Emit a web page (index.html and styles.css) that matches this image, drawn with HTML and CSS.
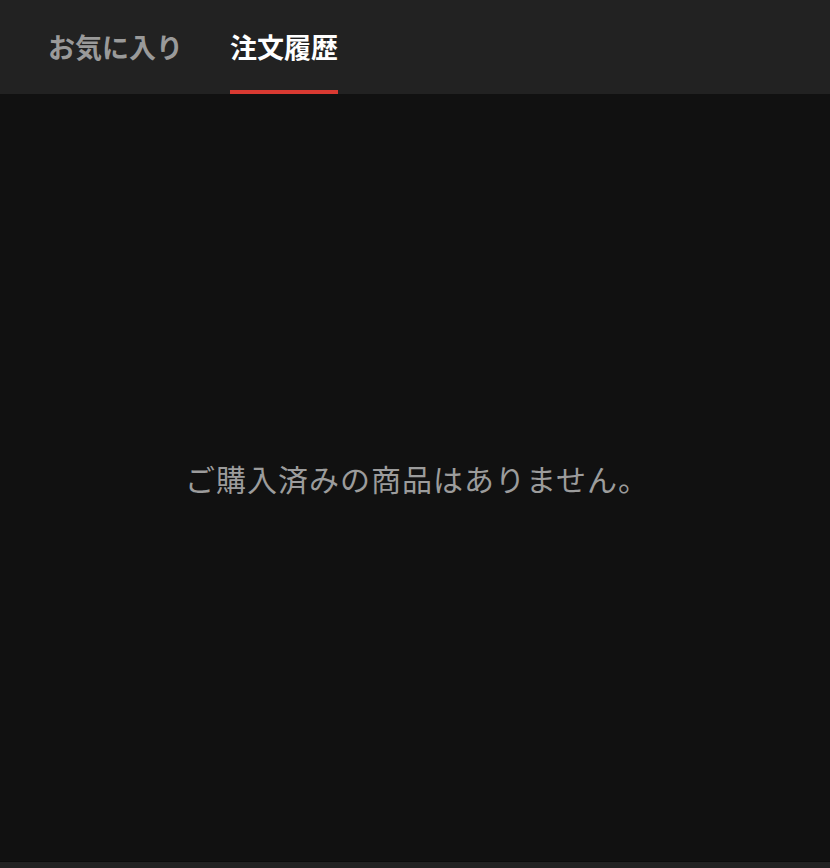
FILE: index.html
```html
<!DOCTYPE html>
<html lang="ja">
<head>
<meta charset="utf-8">
<link rel="stylesheet" href="styles.css">
</head>
<body>
<div class="app">
  <nav class="tabs">
    <div class="tab">お気に入り</div>
    <div class="tab active">注文履歴</div>
  </nav>
  <main class="content">
    <p class="empty">ご購入済みの商品はありません。</p>
  </main>
  <div class="bottom"></div>
</div>
</body>
</html>
```

FILE: styles.css
```css
html, body {
  margin: 0;
  padding: 0;
  height: 100%;
  background: #111111;
}
body {
  font-family: "Noto Sans CJK JP", "Noto Sans", sans-serif;
}
.app {
  display: flex;
  flex-direction: column;
  height: 868px;
}
.tabs {
  display: flex;
  gap: 47px;
  height: 94px;
  padding: 0 0 0 48px;
  background: #222222;
  box-sizing: border-box;
}
.tab {
  display: flex;
  align-items: center;
  box-sizing: border-box;
  height: 94px;
  padding-top: 2px;
  font-size: 27px;
  font-weight: 700;
  color: #9a9a9a;
  border-bottom: 4px solid transparent;
  line-height: 1;
}
.tab.active {
  color: #ffffff;
  border-bottom-color: #d93a32;
}
.content {
  flex: 1;
  display: flex;
  align-items: center;
  justify-content: center;
}
.empty {
  margin: 0;
  padding: 0 0 0 4px;
  font-size: 30px;
  letter-spacing: 1px;
  color: #9c9c9c;
}
.bottom {
  height: 6px;
  background: #222222;
  border-top: 1px solid #0c0c0c;
}
```
